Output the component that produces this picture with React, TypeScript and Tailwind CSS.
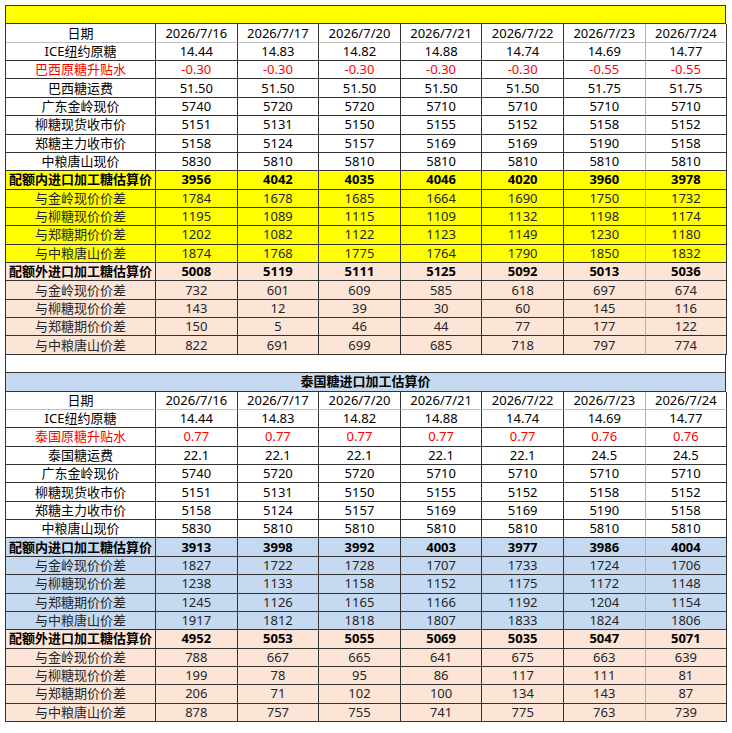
import React from "react";

type Row = {
  label: string;
  values: string[];
  kind?: "red" | "bold" | "sub";
  bg?: string;
};

const dates = ["2026/7/16", "2026/7/17", "2026/7/20", "2026/7/21", "2026/7/22", "2026/7/23", "2026/7/24"];

const common = (second: boolean): Row[] => [
  { label: "ICE纽约原糖", values: ["14.44", "14.83", "14.82", "14.88", "14.74", "14.69", "14.77"] },
  second
    ? { label: "泰国原糖升贴水", kind: "red", values: ["0.77", "0.77", "0.77", "0.77", "0.77", "0.76", "0.76"] }
    : { label: "巴西原糖升贴水", kind: "red", values: ["-0.30", "-0.30", "-0.30", "-0.30", "-0.30", "-0.55", "-0.55"] },
  second
    ? { label: "泰国糖运费", values: ["22.1", "22.1", "22.1", "22.1", "22.1", "24.5", "24.5"] }
    : { label: "巴西糖运费", values: ["51.50", "51.50", "51.50", "51.50", "51.50", "51.75", "51.75"] },
  { label: "广东金岭现价", values: ["5740", "5720", "5720", "5710", "5710", "5710", "5710"] },
  { label: "柳糖现货收市价", values: ["5151", "5131", "5150", "5155", "5152", "5158", "5152"] },
  { label: "郑糖主力收市价", values: ["5158", "5124", "5157", "5169", "5169", "5190", "5158"] },
  { label: "中粮唐山现价", values: ["5830", "5810", "5810", "5810", "5810", "5810", "5810"] },
];

const subLabels = ["与金岭现价价差", "与柳糖现价价差", "与郑糖期价价差", "与中粮唐山价差"];

function block(bg: string, head: string, inside: string, subs: string[][]): Row[] {
  return [
    { label: inside, values: subs[0], kind: "bold", bg },
    ...subs.slice(1).map((v, i) => ({ label: subLabels[i], values: v, kind: "sub" as const, bg })),
  ].map((r, i) => (i === 0 ? { ...r, label: head } : r));
}

const yellow = "bg-[#ffff00]";
const peach = "bg-[#fce4d6]";
const blue = "bg-[#c5d9f1]";

const brazil: Row[] = [
  ...common(false),
  ...block(yellow, "配额内进口加工糖估算价", "", [
    ["3956", "4042", "4035", "4046", "4020", "3960", "3978"],
    ["1784", "1678", "1685", "1664", "1690", "1750", "1732"],
    ["1195", "1089", "1115", "1109", "1132", "1198", "1174"],
    ["1202", "1082", "1122", "1123", "1149", "1230", "1180"],
    ["1874", "1768", "1775", "1764", "1790", "1850", "1832"],
  ]),
  ...block(peach, "配额外进口加工糖估算价", "", [
    ["5008", "5119", "5111", "5125", "5092", "5013", "5036"],
    ["732", "601", "609", "585", "618", "697", "674"],
    ["143", "12", "39", "30", "60", "145", "116"],
    ["150", "5", "46", "44", "77", "177", "122"],
    ["822", "691", "699", "685", "718", "797", "774"],
  ]),
];

const thai: Row[] = [
  ...common(true),
  ...block(blue, "配额内进口加工糖估算价", "", [
    ["3913", "3998", "3992", "4003", "3977", "3986", "4004"],
    ["1827", "1722", "1728", "1707", "1733", "1724", "1706"],
    ["1238", "1133", "1158", "1152", "1175", "1172", "1148"],
    ["1245", "1126", "1165", "1166", "1192", "1204", "1154"],
    ["1917", "1812", "1818", "1807", "1833", "1824", "1806"],
  ]),
  ...block(peach, "配额外进口加工糖估算价", "", [
    ["4952", "5053", "5055", "5069", "5035", "5047", "5071"],
    ["788", "667", "665", "641", "675", "663", "639"],
    ["199", "78", "95", "86", "117", "111", "81"],
    ["206", "71", "102", "100", "134", "143", "87"],
    ["878", "757", "755", "741", "775", "763", "739"],
  ]),
];

function DataRow({ row, light }: { row: Row; light?: boolean }) {
  const bg = row.bg ?? "bg-white";
  const text =
    row.kind === "red" ? "text-[#ff0000]" : row.kind === "sub" ? "text-[#262626]" : "text-black";
  const weight = row.kind === "bold" ? "font-bold" : "";
  const bottom = light ? "border-b-[#bfbfbf]" : "border-b-[#333]";
  return (
    <div className={`grid grid-cols-[150px_repeat(7,81.6px)] h-[18.37px] ${bg} ${text} ${weight}`}>
      <div className={`flex items-center justify-center border-b border-r border-r-[#333] ${bottom}`}>
        {row.label}
      </div>
      {row.values.map((v, i) => (
        <div
          key={i}
          className={`flex items-center justify-center border-b border-r ${bottom} ${
            i === 5 ? "border-r-[#b0b0b0]" : "border-r-[#333]"
          }`}
        >
          {v}
        </div>
      ))}
    </div>
  );
}

function TitleRow({ bg, title }: { bg: string; title: string }) {
  return (
    <div
      className={`flex h-[18.37px] items-center justify-center border-b border-r border-[#333] font-bold ${bg}`}
    >
      {title}
    </div>
  );
}

function Sheet({ title, bg, rows }: { title: string; bg: string; rows: Row[] }) {
  return (
    <>
      <TitleRow bg={bg} title={title} />
      <DataRow row={{ label: "日期", values: dates }} light />
      {rows.map((r, i) => (
        <DataRow key={i} row={r} />
      ))}
    </>
  );
}

export default function App() {
  return (
    <div className="min-h-screen bg-white pl-[5px] pt-[5px] font-['Noto_Sans','Noto_Sans_CJK_SC',sans-serif] text-[13px] leading-none">
      <div className="w-[721.2px] border-l border-t border-[#333]">
        <Sheet title="" bg={yellow} rows={brazil} />
        {/* blank spacer row */}
        <div className="h-[18.37px] border-b border-r border-[#333] bg-white" />
        <Sheet title="泰国糖进口加工估算价" bg={blue} rows={thai} />
      </div>
    </div>
  );
}
